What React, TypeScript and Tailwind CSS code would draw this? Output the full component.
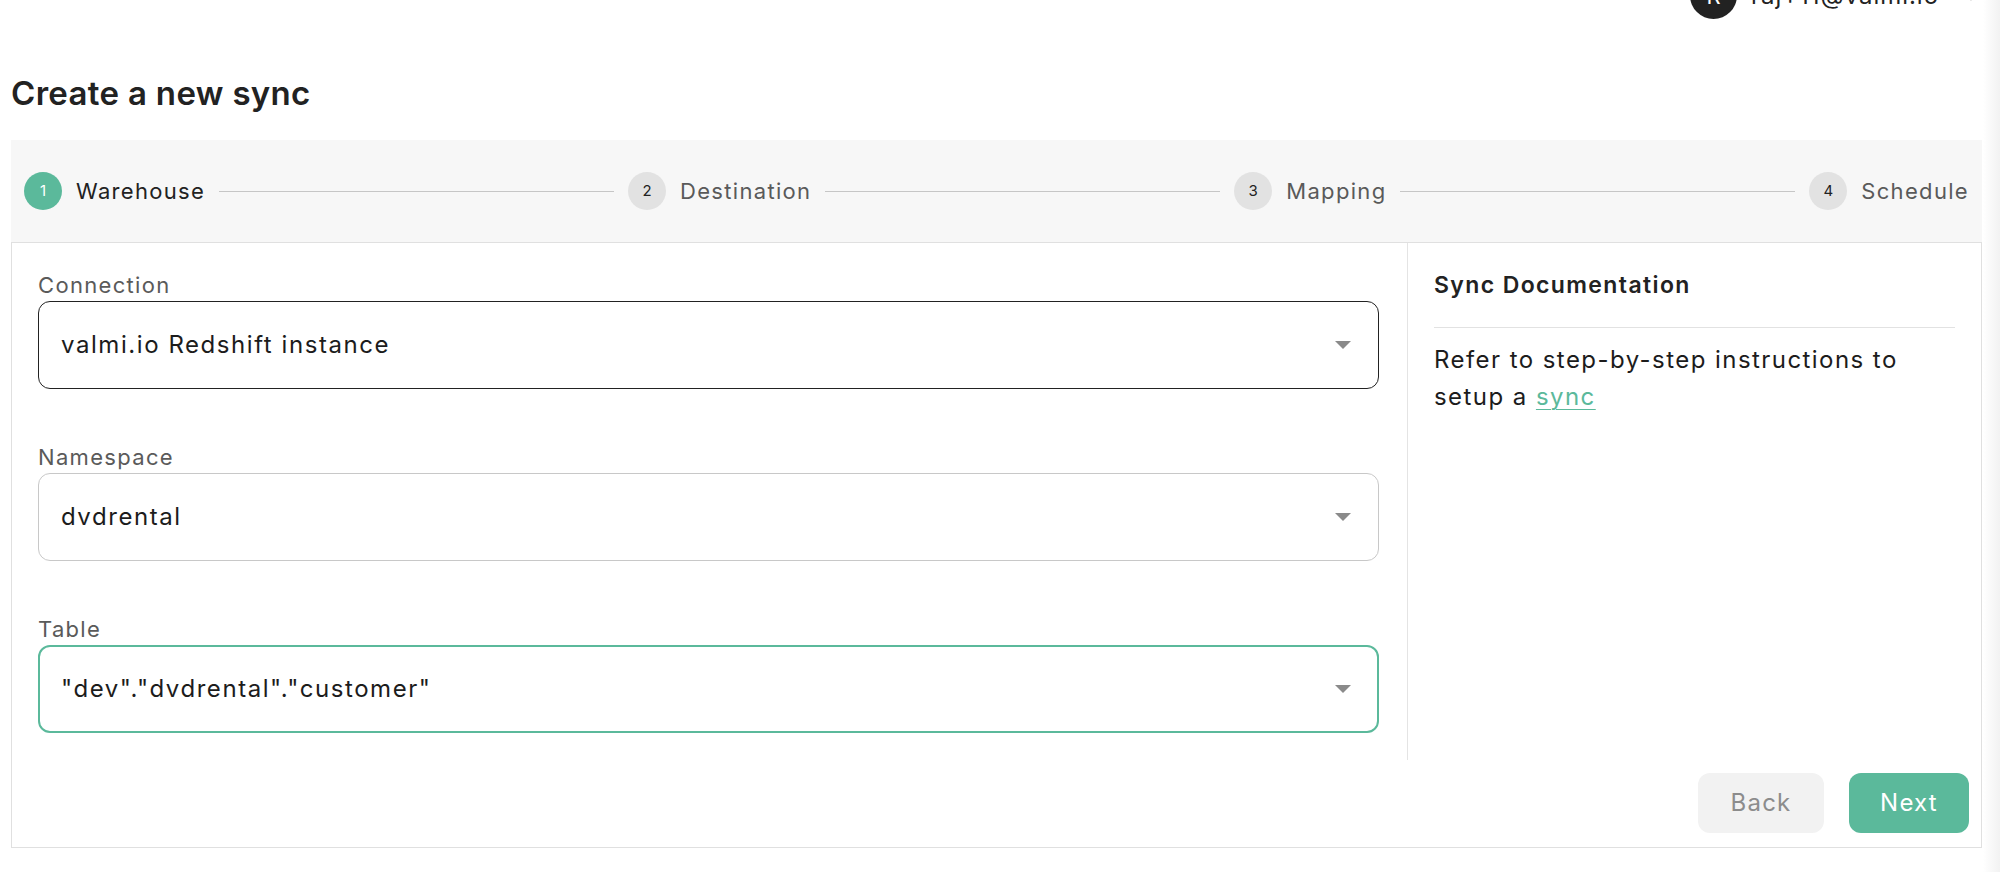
import React from "react";

function Arrow() {
  return (
    <svg width="16" height="8" viewBox="0 0 16 8" className="shrink-0">
      <path d="M0 0H16L8 8Z" fill="#8a8a8a" />
    </svg>
  );
}

function Step({ n, label, active }: { n: number; label: string; active?: boolean }) {
  return (
    <div className="flex items-center gap-[14px] shrink-0">
      <div
        className={
          active
            ? "w-[38px] h-[38px] rounded-full flex items-center justify-center text-[15px] bg-[#5bb99b] text-white"
            : "w-[38px] h-[38px] rounded-full flex items-center justify-center text-[15px] bg-[#e2e2e2] text-[#222]"
        }
      >
        {n}
      </div>
      <span
        className={
          active
            ? "text-[22px] leading-[30px] tracking-[0.06em] text-[#222]"
            : "text-[22px] leading-[30px] tracking-[0.06em] text-[#5a5a5a]"
        }
      >
        {label}
      </span>
    </div>
  );
}

function Line() {
  return <div className="flex-1 h-px bg-[#c6c6c6] mx-[14px]" />;
}

function Field({
  label,
  value,
  variant,
}: {
  label: string;
  value: string;
  variant: "dark" | "light" | "green";
}) {
  const box =
    variant === "dark"
      ? "h-[88px] rounded-[12px] border border-[#222] flex items-center justify-between pl-[22px] pr-[27px]"
      : variant === "light"
      ? "h-[88px] rounded-[12px] border border-[#c8c8c8] flex items-center justify-between pl-[22px] pr-[27px]"
      : "h-[88px] rounded-[12px] border-2 border-[#5bb99b] flex items-center justify-between pl-[21px] pr-[26px]";
  return (
    <div className="flex flex-col">
      <div className="h-[32px] leading-[32px] text-[22px] tracking-[0.06em] text-[#5a5a5a]">{label}</div>
      <div className={box}>
        <span className="text-[24px] tracking-[0.065em] text-[#1c1c1c]">{value}</span>
        <Arrow />
      </div>
    </div>
  );
}

export default function App() {
  return (
    <div className="w-[2000px] h-[872px] overflow-hidden bg-white flex font-['Inter','Liberation_Sans',sans-serif]">
      <div className="w-[1983px] shrink-0 flex flex-col">
        {/* header (scrolled partially off screen) */}
        <div className="h-[19px] flex justify-end items-end pr-[4px]">
          <div className="h-[47px] flex items-center shrink-0">
            <div className="w-[47px] h-[47px] rounded-full bg-[#222] flex items-center justify-center text-white text-[22px] leading-none">
              R
            </div>
            <span className="ml-[14px] text-[24px] tracking-[0.04em] text-[#222] leading-[30px]">raj+11@valmi.io</span>
            <svg width="16" height="10" viewBox="0 0 16 10" className="ml-[24px]">
              <path d="M2 2L8 8L14 2" stroke="#333" strokeWidth="2" fill="none" />
            </svg>
          </div>
        </div>

        {/* title */}
        <h1 className="mt-[52px] pl-[11px] text-[33px] leading-[44px] font-semibold tracking-[0.01em] text-[#222]">
          Create a new sync
        </h1>

        <div className="mt-[25px] ml-[11px] w-[1971px] flex flex-col">
          {/* stepper */}
          <div className="h-[102px] bg-[#f7f7f7] flex items-center px-[13px]">
            <Step n={1} label="Warehouse" active />
            <Line />
            <Step n={2} label="Destination" />
            <Line />
            <Step n={3} label="Mapping" />
            <Line />
            <Step n={4} label="Schedule" />
          </div>

          {/* content box */}
          <div className="border border-[#e0e0e0] flex flex-col">
            <div className="flex">
              <div className="w-[1396px] shrink-0 border-r border-[#e4e4e4] pl-[26px] pr-[28px] pt-[26px] pb-[27px] flex flex-col gap-[52px]">
                <Field label="Connection" value="valmi.io Redshift instance" variant="dark" />
                <Field label="Namespace" value="dvdrental" variant="light" />
                <Field label="Table" value={'"dev"."dvdrental"."customer"'} variant="green" />
              </div>
              <div className="flex-1 px-[26px] pt-[26px]">
                <div className="h-[32px] leading-[32px] text-[23px] font-semibold tracking-[0.06em] text-[#222]">
                  Sync Documentation
                </div>
                <div className="mt-[26px] border-t border-[#e2e2e2]" />
                <p className="mt-[13px] text-[24px] leading-[37px] tracking-[0.06em] text-[#1c1c1c]">
                  Refer to step-by-step instructions to setup a{" "}
                  <a className="text-[#5bb99b] underline underline-offset-[4px] decoration-1">sync</a>
                </p>
              </div>
            </div>
            <div className="flex justify-end gap-[25px] pt-[13px] pb-[14px] pr-[12px]">
              <button className="w-[126px] h-[60px] rounded-[12px] bg-[#f2f2f2] text-[24px] tracking-[0.05em] text-[#8c8c8c]">
                Back
              </button>
              <button className="w-[120px] h-[60px] rounded-[12px] bg-[#5bb99b] text-[24px] tracking-[0.05em] text-white">
                Next
              </button>
            </div>
          </div>
        </div>
      </div>
      <div className="flex-1 bg-gradient-to-r from-white to-[#f2f2f2]" />
    </div>
  );
}
